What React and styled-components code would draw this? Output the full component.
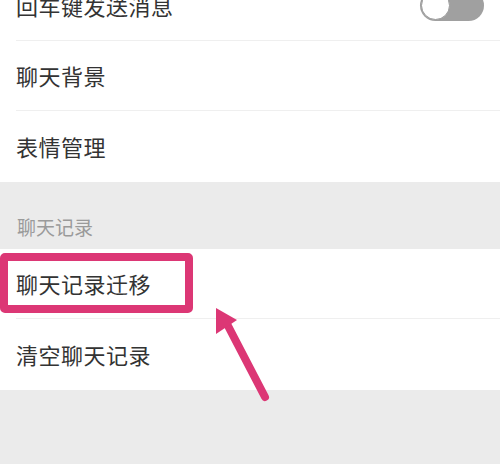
import React from 'react';
import styled, { createGlobalStyle } from 'styled-components';

const GlobalStyle = createGlobalStyle`
  html, body {
    margin: 0;
    padding: 0;
    background: #ebebeb;
  }
  body {
    font-family: 'Noto Sans CJK SC', 'Noto Sans', sans-serif;
  }
`;

const Page = styled.div`
  position: relative;
  width: 500px;
  height: 464px;
  overflow: hidden;
  background: #ebebeb;
`;

const Scroll = styled.div`
  margin-top: -30px;
`;

const Group = styled.section`
  background: #ffffff;
`;

const Row = styled.div`
  position: relative;
  height: 70.5px;
  margin-left: 16px;
  padding-right: 16px;
  display: flex;
  align-items: center;
  justify-content: space-between;
  border-bottom: ${p => (p.$last ? 'none' : '1.5px solid #efefef')};
  box-sizing: border-box;
`;

const Label = styled.span`
  font-size: 22px;
  color: #333333;
  letter-spacing: 0.5px;
`;

const SectionHeader = styled.div`
  height: 67px;
  padding-left: 17px;
  box-sizing: border-box;
  display: flex;
  align-items: flex-end;
  padding-bottom: 9px;
  font-size: 19px;
  color: #9a9a9a;
`;

const Toggle = styled.div`
  position: relative;
  width: 64px;
  height: 31px;
  margin-top: 2px;
  border-radius: 16px;
  background: #a0a0a0;
  box-sizing: border-box;
`;

const Knob = styled.div`
  position: absolute;
  left: 1px;
  top: 1px;
  width: 29px;
  height: 29px;
  border-radius: 50%;
  background: #ffffff;
  border: 1px solid #9a9a9a;
  box-sizing: border-box;
`;

const Highlight = styled.span`
  position: absolute;
  left: -16px;
  top: 4px;
  width: 193px;
  height: 60px;
  border: 8px solid #dc3775;
  border-radius: 5px;
  box-sizing: border-box;
  pointer-events: none;
`;

const Arrow = styled.svg`
  position: absolute;
  left: 0;
  top: 0;
  pointer-events: none;
`;

const items = ['聊天背景', '表情管理'];

const App = () => (
  <>
    <GlobalStyle />
    <Page>
      <Scroll>
        <Group>
          <Row>
            <Label>回车键发送消息</Label>
            <Toggle>
              <Knob />
            </Toggle>
          </Row>
          {items.map((name, i) => (
            <Row key={name} $last={i === items.length - 1}>
              <Label>{name}</Label>
            </Row>
          ))}
        </Group>
        <SectionHeader>聊天记录</SectionHeader>
        <Group>
          <Row>
            <Highlight />
            <Label>聊天记录迁移</Label>
          </Row>
          <Row $last>
            <Label>清空聊天记录</Label>
          </Row>
        </Group>
      </Scroll>
      <Arrow width="500" height="464" viewBox="0 0 500 464">
        <line x1="265" y1="397" x2="226" y2="322" stroke="#dc3775" strokeWidth="8" strokeLinecap="round" />
        <polygon points="216,308 237,320 216,334" fill="#dc3775" />
      </Arrow>
    </Page>
  </>
);

export default App;
